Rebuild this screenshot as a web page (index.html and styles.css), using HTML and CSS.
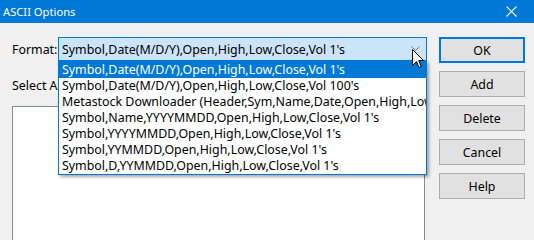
FILE: index.html
```html
<!DOCTYPE html>
<html>
<head>
<meta charset="utf-8">
<link rel="stylesheet" href="styles.css">
</head>
<body>
<div class="titlebar">
  <span class="title">ASCII Options</span>
  <svg class="close" width="11" height="11" viewBox="0 0 11 11"><path d="M0.5 0.5 L10.5 10.5 M10.5 0.5 L0.5 10.5" stroke="#fff" stroke-width="1.1" fill="none"/></svg>
</div>
<div class="content">
  <div class="main">
    <div class="format-row">
      <span class="label">Format:</span>
      <div class="combo">
        <span class="combo-text">Symbol,Date(M/D/Y),Open,High,Low,Close,Vol 1's</span>
        <svg class="chev" width="9" height="6" viewBox="0 0 9 6"><path d="M0.5 0.5 L4.5 4.5 L8.5 0.5" stroke="#7a7a7a" stroke-width="1" fill="none"/></svg>
        <ul class="droplist">
          <li class="sel">Symbol,Date(M/D/Y),Open,High,Low,Close,Vol 1's</li>
          <li>Symbol,Date(M/D/Y),Open,High,Low,Close,Vol 100's</li>
          <li>Metastock Downloader (Header,Sym,Name,Date,Open,High,Low,Close,Vol)</li>
          <li>Symbol,Name,YYYYMMDD,Open,High,Low,Close,Vol 1's</li>
          <li>Symbol,YYYYMMDD,Open,High,Low,Close,Vol 1's</li>
          <li>Symbol,YYMMDD,Open,High,Low,Close,Vol 1's</li>
          <li>Symbol,D,YYMMDD,Open,High,Low,Close,Vol 1's</li>
        </ul>
      </div>
    </div>
    <div class="select-label">Select ASCII Files:</div>
    <div class="filebox"></div>
  </div>
  <div class="buttons">
    <button class="btn default">OK</button>
    <button class="btn">Add</button>
    <button class="btn">Delete</button>
    <button class="btn">Cancel</button>
    <button class="btn">Help</button>
  </div>
</div>
<svg class="cursor" width="13" height="20" viewBox="0 0 13 20"><path d="M0.5 0.5 L0.5 16.5 L4.5 12.5 L7 18.5 L9.2 17.6 L6.7 11.5 L11.5 11.5 Z" fill="#fff" stroke="#000" stroke-width="1" stroke-linejoin="miter"/></svg>
</body>
</html>
```
FILE: styles.css
```css
* { box-sizing: border-box; }
html, body {
  margin: 0;
  padding: 0;
}
body {
  width: 534px;
  height: 240px;
  overflow: hidden;
  background: #f0f0f0;
  font-family: "Noto Sans", "Liberation Sans", sans-serif;
  font-size: 12.4px;
  color: #000;
  position: relative;
}
.titlebar {
  height: 23px;
  background: #0078d7;
  color: #fff;
  display: flex;
  align-items: center;
  justify-content: space-between;
  padding: 0 17px 1px 3px;
}
.title { font-size: 11.2px; }
.close { display: block; }
.content {
  display: flex;
  gap: 12px;
  padding: 14px 9px 0 12px;
}
.main {
  width: 415px;
  display: flex;
  flex-direction: column;
}
.format-row {
  display: flex;
  align-items: center;
  height: 24px;
}
.label { width: 46px; }
.combo {
  position: relative;
  width: 369px;
  height: 24px;
  border: 1px solid #0078d7;
  background: #cce4f7;
  display: flex;
  align-items: center;
  padding-left: 3px;
  z-index: 2;
}
.combo-text { flex: 1; white-space: nowrap; }
.chev { margin-right: 6px; display: block; }
.droplist {
  position: absolute;
  left: -1px;
  top: 23px;
  width: 369px;
  margin: 0;
  padding: 0;
  list-style: none;
  background: #fff;
  border: 1px solid #0078d7;
  box-shadow: 2px 2px 3px rgba(0,0,0,0.35);
  overflow: hidden;
}
.droplist li {
  height: 16px;
  line-height: 16px;
  padding-left: 3px;
  white-space: nowrap;
  overflow: hidden;
}
.droplist li.sel {
  background: #0078d7;
  color: #fff;
}
.select-label {
  margin-top: 17px;
  height: 16px;
  line-height: 16px;
  width: 46px;
  white-space: nowrap;
  overflow: hidden;
}
.filebox {
  margin-top: 12px;
  width: 413px;
  height: 160px;
  background: #fff;
  border: 1px solid #828790;
}
.buttons {
  display: flex;
  flex-direction: column;
  gap: 8px;
}
.btn {
  width: 86px;
  height: 26px;
  font: inherit;
  color: #000;
  background: #e1e1e1;
  border: 1px solid #adadad;
  padding: 0;
}
.btn.default {
  border: 2px solid #0078d7;
}
.cursor {
  position: absolute;
  left: 412px;
  top: 49px;
  z-index: 5;
}
```
